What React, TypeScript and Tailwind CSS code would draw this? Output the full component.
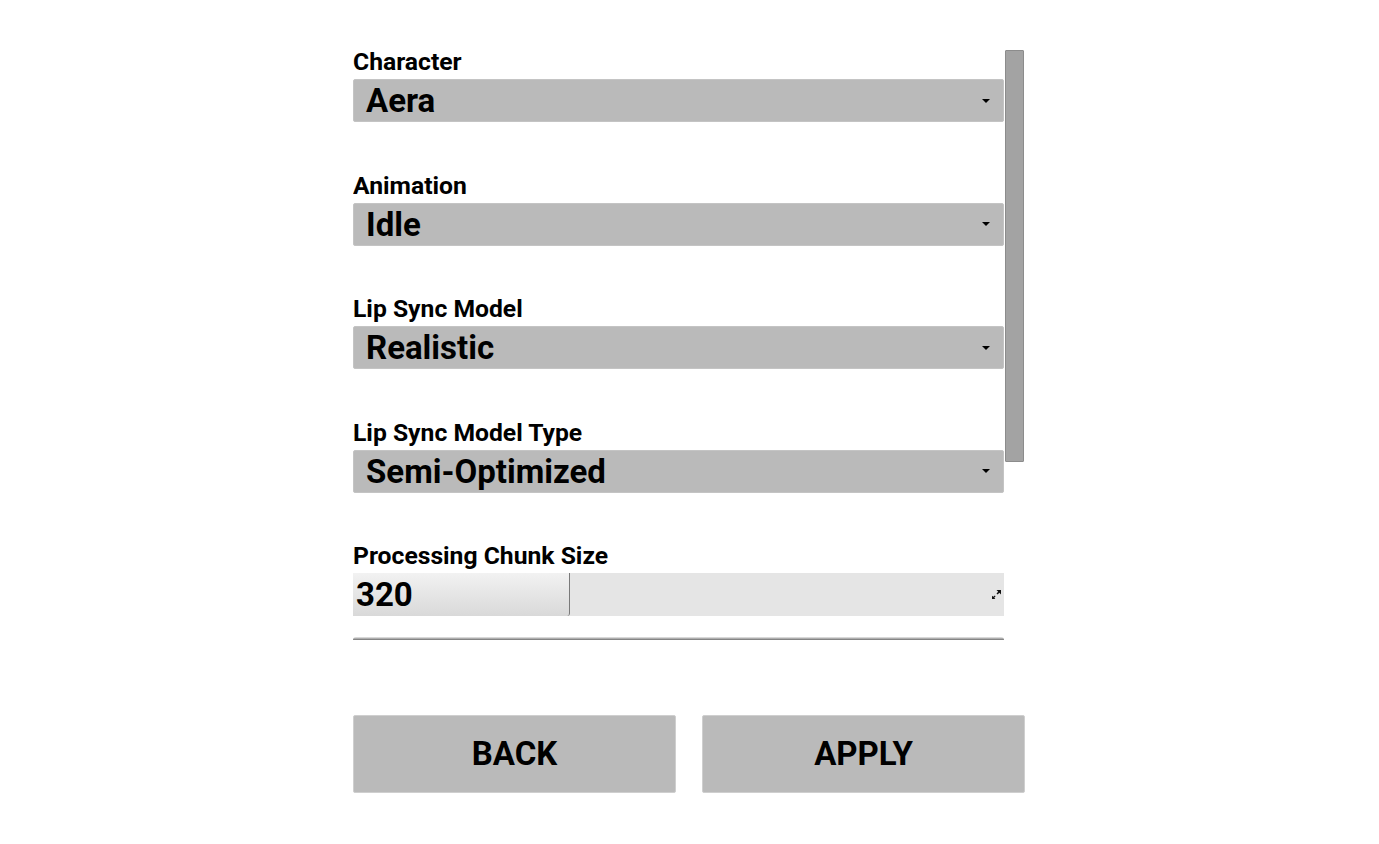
import React from "react";

const font = { fontFamily: "Roboto, 'Liberation Sans', sans-serif" };

function Arrow() {
  return (
    <svg width="8" height="4" viewBox="0 0 8 4" className="block">
      <path d="M0 0 H8 L4 4 Z" fill="#000" />
    </svg>
  );
}

function Dropdown({ label, value }: { label: string; value: string }) {
  return (
    <div className="mb-[51.5px]">
      <div className="h-[29px] text-[24.7px] leading-[24px] font-bold text-black">{label}</div>
      <div className="h-[43px] flex items-center justify-between bg-[#bababa] border border-[#c4c4c4] rounded-[2px] pl-[12px] pr-[13px]">
        <span className="text-[33px] font-bold text-black leading-none">{value}</span>
        <Arrow />
      </div>
    </div>
  );
}

function ResizeIcon() {
  return (
    <svg width="9" height="9" viewBox="0 0 8 8" className="block">
      <path d="M4 0 H8 V4 L6.5 2.5 L5 4 L4 3 L5.5 1.5 Z" fill="#111" />
      <path d="M0 8 V5 L1.2 6 L2.5 4.8 L3.2 5.5 L2 6.8 L3 8 Z" fill="#111" />
    </svg>
  );
}

export default function App() {
  return (
    <div className="w-full h-[844px] bg-white pl-[353px]" style={font}>
      <div className="w-[672px] pt-[44px]">
        <div className="flex h-[596px] overflow-hidden">
          <div className="w-[651px] flex flex-col pt-[6px]">
            <Dropdown label="Character" value="Aera" />
            <Dropdown label="Animation" value="Idle" />
            <Dropdown label="Lip Sync Model" value="Realistic" />
            <Dropdown label="Lip Sync Model Type" value="Semi-Optimized" />
            <div>
              <div className="h-[29px] text-[24.7px] leading-[24px] font-bold text-black">Processing Chunk Size</div>
              <div className="h-[43px] flex bg-[#e5e5e5]">
                <div className="w-[217px] h-full flex items-center pl-[3px] bg-gradient-to-b from-[#f2f2f2] to-[#d9d9d9] border-r border-[#7a7a7a] rounded-br-[3px]">
                  <span className="text-[33px] font-bold text-black leading-none">320</span>
                </div>
                <div className="flex-1 flex items-center justify-end pr-[3px]">
                  <ResizeIcon />
                </div>
              </div>
              <div className="mt-[21px] h-[4px] rounded-t-[3px] bg-gradient-to-b from-[#ededed] via-[#9a9a9a] to-[#4a4a4a]" />
            </div>
          </div>
          <div className="w-[21px] pl-[1px] pr-[1px] pt-[6px]">
            <div className="h-[412px] bg-[#a3a3a3] border border-[#8c8c8c] rounded-[1px]" />
          </div>
        </div>
        <div className="mt-[75px] flex gap-[26px]">
          <button className="w-[323px] h-[78px] bg-[#bababa] border border-[#cfcfcf] rounded-[2px] text-[33px] font-bold text-black">
            BACK
          </button>
          <button className="w-[323px] h-[78px] bg-[#bababa] border border-[#cfcfcf] rounded-[2px] text-[33px] font-bold text-black">
            APPLY
          </button>
        </div>
      </div>
    </div>
  );
}
